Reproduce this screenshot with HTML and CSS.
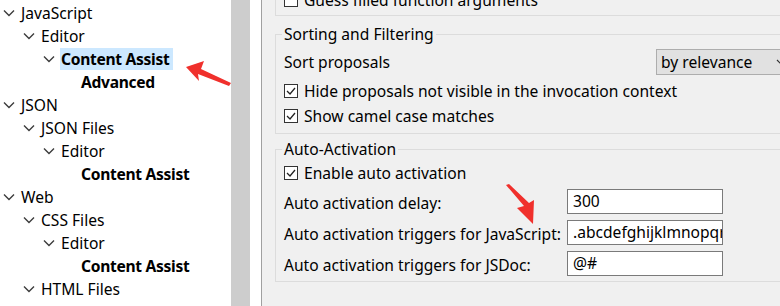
FILE: index.html
```html
<!DOCTYPE html>
<html>
<head>
<meta charset="utf-8">
<link rel="stylesheet" href="styles.css">
</head>
<body>
<div class="tree">
  <div class="node l0"><span class="tog"><svg width="12" height="8" viewBox="0 0 12 8"><polyline points="1,1.5 6,6.5 11,1.5"/></svg></span><span class="lbl">JavaScript</span></div>
  <div class="node l1"><span class="tog"><svg width="12" height="8" viewBox="0 0 12 8"><polyline points="1,1.5 6,6.5 11,1.5"/></svg></span><span class="lbl">Editor</span></div>
  <div class="node l2"><span class="tog"><svg width="12" height="8" viewBox="0 0 12 8"><polyline points="1,1.5 6,6.5 11,1.5"/></svg></span><span class="lbl bold sel">Content Assist</span></div>
  <div class="node l3"><span class="tog"></span><span class="lbl bold">Advanced</span></div>
  <div class="node l0"><span class="tog"><svg width="12" height="8" viewBox="0 0 12 8"><polyline points="1,1.5 6,6.5 11,1.5"/></svg></span><span class="lbl">JSON</span></div>
  <div class="node l1"><span class="tog"><svg width="12" height="8" viewBox="0 0 12 8"><polyline points="1,1.5 6,6.5 11,1.5"/></svg></span><span class="lbl">JSON Files</span></div>
  <div class="node l2"><span class="tog"><svg width="12" height="8" viewBox="0 0 12 8"><polyline points="1,1.5 6,6.5 11,1.5"/></svg></span><span class="lbl">Editor</span></div>
  <div class="node l3"><span class="tog"></span><span class="lbl bold">Content Assist</span></div>
  <div class="node l0"><span class="tog"><svg width="12" height="8" viewBox="0 0 12 8"><polyline points="1,1.5 6,6.5 11,1.5"/></svg></span><span class="lbl">Web</span></div>
  <div class="node l1"><span class="tog"><svg width="12" height="8" viewBox="0 0 12 8"><polyline points="1,1.5 6,6.5 11,1.5"/></svg></span><span class="lbl">CSS Files</span></div>
  <div class="node l2"><span class="tog"><svg width="12" height="8" viewBox="0 0 12 8"><polyline points="1,1.5 6,6.5 11,1.5"/></svg></span><span class="lbl">Editor</span></div>
  <div class="node l3"><span class="tog"></span><span class="lbl bold">Content Assist</span></div>
  <div class="node l1"><span class="tog"><svg width="12" height="8" viewBox="0 0 12 8"><polyline points="1,1.5 6,6.5 11,1.5"/></svg></span><span class="lbl">HTML Files</span></div>
</div>
<div class="scroll"></div>
<div class="gap"></div>
<div class="divider"></div>
<div class="right">
  <div class="group top">
    <div class="row"><span class="cb"></span><span>Guess filled function arguments</span></div>
  </div>
  <fieldset class="group sorting">
    <legend>Sorting and Filtering</legend>
    <div class="row sort"><span class="sort-label">Sort proposals</span><div class="combo"><span>by relevance</span><svg width="10" height="6" viewBox="0 0 10 6"><polyline points="1,1 5,5 9,1"/></svg></div></div>
    <div class="row"><span class="cb on"><svg width="12" height="12" viewBox="0 0 12 12"><polyline points="2,6 5,9 10,3"/></svg></span><span>Hide proposals not visible in the invocation context</span></div>
    <div class="row"><span class="cb on"><svg width="12" height="12" viewBox="0 0 12 12"><polyline points="2,6 5,9 10,3"/></svg></span><span>Show camel case matches</span></div>
  </fieldset>
  <fieldset class="group auto">
    <legend>Auto-Activation</legend>
    <div class="row"><span class="cb on"><svg width="12" height="12" viewBox="0 0 12 12"><polyline points="2,6 5,9 10,3"/></svg></span><span>Enable auto activation</span></div>
    <div class="form">
      <span class="flabel">Auto activation delay:</span><div class="input">300</div>
      <span class="flabel">Auto activation triggers for JavaScript:</span><div class="input">.abcdefghijklmnopqrstuvwxyz</div>
      <span class="flabel">Auto activation triggers for JSDoc:</span><div class="input">@#</div>
    </div>
  </fieldset>
</div>
<svg class="arrows" width="780" height="306" viewBox="0 0 780 306">
  <polygon points="186,67 204,61 201,69 231,83 229,86 198,74 199,81" fill="#f0302c"/>
  <polygon points="533,224 517,208 524,206 506,185 509,184 529,203 534,200" fill="#f0302c"/>
</svg>
</body>
</html>
```
FILE: styles.css
```css
html, body {
  margin: 0;
  padding: 0;
}
body {
  width: 780px;
  height: 306px;
  overflow: hidden;
  display: flex;
  position: relative;
  font-family: "Noto Sans", "Open Sans", sans-serif;
  font-size: 15.6px;
  color: #000;
  background: #fff;
}
.tree {
  width: 231px;
  flex: none;
  padding-top: 1px;
  background: #fff;
}
.node {
  height: 23px;
  display: flex;
  align-items: center;
  white-space: nowrap;
}
.l0 { padding-left: 0; }
.l1 { padding-left: 20px; }
.l2 { padding-left: 40px; }
.l3 { padding-left: 60px; }
.tog {
  width: 17px;
  flex: none;
  display: flex;
  align-items: center;
  padding-left: 3px;
}
.tog svg {
  fill: none;
  stroke: #3c3c3c;
  stroke-width: 1.4;
}
.lbl {
  padding: 0 4px 0 1px;
  line-height: 22px;
}
.bold {
  font-weight: bold;
  letter-spacing: -0.3px;
}
.sel { background: #cce8ff; }
.scroll {
  width: 19px;
  flex: none;
  background: #cdcdcd;
}
.gap {
  width: 11px;
  flex: none;
  background: #fff;
}
.divider {
  width: 1px;
  flex: none;
  background: #a0a0a0;
}
.right {
  flex: 1;
  background: #f0f0f0;
  overflow: hidden;
  padding-left: 13px;
  display: flex;
  flex-direction: column;
}
.group {
  width: 530px;
  border: 1px solid #dcdcdc;
  margin: 0;
  box-sizing: border-box;
}
.top {
  border-top: none;
  margin-top: -13px;
  padding: 0 8px 3px;
}
fieldset.group {
  padding: 0 8px;
}
legend {
  padding: 0 2px;
  margin-left: -2px;
  line-height: 22px;
}
.sorting {
  margin-top: 7px;
  padding-bottom: 5px !important;
}
.auto {
  margin-top: 4px;
  padding-bottom: 5px !important;
}
.row {
  height: 25px;
  display: flex;
  align-items: center;
  white-space: nowrap;
}
.sort {
  height: 28px;
  margin-top: 3px;
  margin-bottom: 2px;
}
.sort-label {
  width: 372px;
}
.combo {
  height: 26px;
  width: 140px;
  box-sizing: border-box;
  border: 1px solid #adadad;
  background: #e1e1e1;
  display: flex;
  align-items: center;
  padding-left: 4px;
  gap: 24px;
}
.combo svg {
  fill: none;
  stroke: #333;
  stroke-width: 1.2;
}
.cb {
  width: 14px;
  height: 14px;
  box-sizing: border-box;
  border: 1px solid #333;
  background: #fff;
  margin-right: 6px;
  flex: none;
  display: flex;
  align-items: center;
  justify-content: center;
}
.cb svg {
  fill: none;
  stroke: #222;
  stroke-width: 1.3;
}
.form {
  display: grid;
  grid-template-columns: 283px 156px;
  row-gap: 6px;
  margin-top: 4px;
  align-items: center;
}
.flabel {
  white-space: nowrap;
  padding-top: 2px;
}
.input {
  height: 25px;
  box-sizing: border-box;
  border: 1px solid #7a7a7a;
  background: #fff;
  padding-left: 5px;
  line-height: 23px;
  overflow: hidden;
  white-space: nowrap;
}
.arrows {
  position: absolute;
  left: 0;
  top: 0;
  pointer-events: none;
}
```
